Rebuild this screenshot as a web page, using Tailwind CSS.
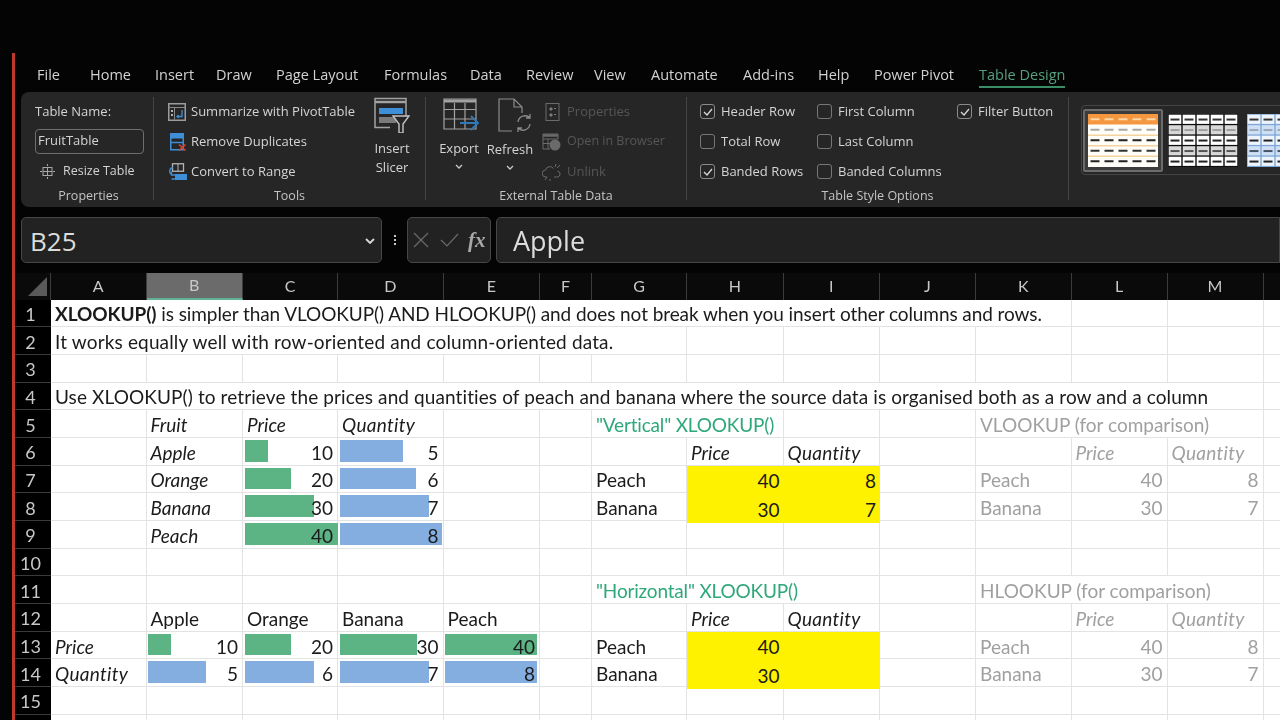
<!DOCTYPE html>
<html lang="en">
  <head>
    <meta charset="UTF-8" />
    <title>XLOOKUP - Excel</title>
    <script src="https://cdn.jsdelivr.net/npm/@tailwindcss/browser@4"></script>
  </head>
  <body class="bg-[#040404] overflow-hidden font-['Open_Sans',sans-serif]">
    <div class="pt-[53px] pl-[12px] h-[720px] blur-[0.4px]">
      <div class="border-l-[3px] border-[#bf382c] h-full overflow-hidden">
        <!-- tabs -->
        <div class="flex h-[39px] pl-[22px] pt-[5px] items-center text-[14.5px] text-[#d2d2d2] whitespace-nowrap">
          <div class="w-[53px]">File</div>
          <div class="w-[65px]">Home</div>
          <div class="w-[61px]">Insert</div>
          <div class="w-[60px]">Draw</div>
          <div class="w-[108px]">Page Layout</div>
          <div class="w-[86px]">Formulas</div>
          <div class="w-[56px]">Data</div>
          <div class="w-[68px]">Review</div>
          <div class="w-[57px]">View</div>
          <div class="w-[92px]">Automate</div>
          <div class="w-[75px]">Add-ins</div>
          <div class="w-[56px]">Help</div>
          <div class="w-[105px]">Power Pivot</div>
          <div class="relative text-[#55a080]">
            Table Design
            <div class="absolute left-0 right-0 top-[22px] h-[2px] bg-[#3d8c68]"></div>
          </div>
        </div>

        <!-- ribbon -->
        <div class="ml-[6px] h-[115px] bg-[#262626] rounded-l-[8px] flex text-[13px] text-[#d4d4d4] whitespace-nowrap">
          <!-- properties -->
          <div class="w-[132px] pt-[4px] shrink-0">
            <div class="h-[30px] pl-[14px] pt-[1px] flex items-center">Table Name:</div>
            <div class="h-[30px] pl-[14px] flex items-center">
              <div class="w-[109px] h-[25px] border border-[#6e6e6e] rounded-[4px] pl-[2px] flex items-center">FruitTable</div>
            </div>
            <div class="h-[30px] pl-[19px] pt-[1px] flex items-center gap-[8px] text-[12.5px]">
              <svg width="15" height="17" viewBox="0 0 15 17" fill="none" stroke="#a8a8a8" stroke-width="1">
                <rect x="3" y="4.5" width="9" height="8" />
                <path d="M3 8.5h9M7.5 4.5v8M7.5 1v2M7.5 14v2M0 8.5h2M13 8.5h2" />
              </svg>
              <span>Resize Table</span>
            </div>
            <div class="h-[20px] pt-[1px] pl-[3px] text-center text-[12.5px] text-[#c4c4c4]">Properties</div>
          </div>
          <div class="w-px h-[103px] mt-[5px] bg-[#454545] shrink-0"></div>

          <!-- tools -->
          <div class="w-[271px] pt-[4px] shrink-0">
            <div class="flex h-[90px]">
              <div class="w-[216px] pl-[14px]">
                <div class="h-[30px] pt-[1px] flex items-center gap-[5px]">
                  <svg width="18" height="18" viewBox="0 0 18 18" fill="none">
                    <rect x="0.75" y="0.75" width="16.5" height="16.5" stroke="#9c9c9c" stroke-width="1.5" />
                    <path d="M1 4.5h16M6.5 4.5v12" stroke="#8a8a8a" />
                    <path d="M3 7h2v2H3zM3 11h2v2H3z" fill="#b4b4b4" />
                    <path d="M14 7v6.5H9M10.5 12l-1.5 1.5 1.5 1.5" stroke="#3f8fd8" stroke-width="1.3" />
                  </svg>
                  <span>Summarize with PivotTable</span>
                </div>
                <div class="h-[30px] pt-[1px] flex items-center gap-[4px] pl-[2px]">
                  <svg width="17" height="18" viewBox="0 0 17 18" fill="none">
                    <rect x="0.75" y="0.75" width="12.5" height="16" stroke="#3f8fd8" stroke-width="1.5" />
                    <rect x="1" y="1" width="12" height="4.5" fill="#3f8fd8" />
                    <path d="M1 9.5h12" stroke="#3f8fd8" stroke-width="1.5" />
                    <path d="M9 11.5l6.5 6M15.5 11.5l-6.5 6" stroke="#d8442e" stroke-width="1.6" />
                  </svg>
                  <span>Remove Duplicates</span>
                </div>
                <div class="h-[30px] pt-[1px] flex items-center gap-[4px]">
                  <svg width="19" height="18" viewBox="0 0 19 18" fill="none">
                    <rect x="4.5" y="0.75" width="11" height="7.5" stroke="#b4b4b4" stroke-width="1.3" />
                    <path d="M10 1v7" stroke="#b4b4b4" />
                    <rect x="7" y="11" width="12" height="6" fill="#3f8fd8" />
                    <path d="M5 4.5C1.5 5 .5 9.5 3.5 11.5M3.5 8.5v3.5H7M7 16H3.5" stroke="#3f8fd8" stroke-width="1.3" />
                  </svg>
                  <span>Convert to Range</span>
                </div>
              </div>
              <div class="w-[44px] flex flex-col items-center">
                <svg class="mt-[1px]" width="36" height="36" viewBox="0 0 36 36" fill="none">
                  <path d="M32 20V1.5H1v29h15" stroke="#a2a2a2" stroke-width="1.5" />
                  <path d="M1 5h31" stroke="#a2a2a2" stroke-width="2.5" />
                  <rect x="5" y="11" width="24" height="6" fill="#3f8fd8" />
                  <rect x="5" y="20" width="17" height="6" fill="#7a7a7a" />
                  <path d="M19 19h16l-6 8v9h-4v-9z" fill="#262626" stroke="#c4c4c4" stroke-width="1.4" />
                </svg>
                <div class="mt-[6px] leading-[19px] text-center">Insert<br />Slicer</div>
              </div>
            </div>
            <div class="h-[20px] pt-[1px] text-center text-[12.5px] text-[#c4c4c4]">Tools</div>
          </div>
          <div class="w-px h-[103px] mt-[5px] bg-[#454545] shrink-0"></div>

          <!-- external table data -->
          <div class="w-[260px] pt-[4px] shrink-0">
            <div class="flex h-[90px]">
              <div class="w-[46px] ml-[10px] flex flex-col items-center">
                <svg class="mt-[2px] ml-[3px]" width="36" height="34" viewBox="0 0 36 34" fill="none">
                  <path d="M1 1h32v30H1z" stroke="#a2a2a2" stroke-width="1.2" />
                  <path d="M1 3h32" stroke="#a2a2a2" stroke-width="3" />
                  <path d="M1 11.5h32M1 21h32M11.5 5v26M22 5v26" stroke="#a2a2a2" stroke-width="1.2" />
                  <path d="M17 25h17M28 18l7 7-7 7" stroke="#2f79b8" stroke-width="1.8" />
                </svg>
                <div class="mt-[7px] leading-[19px]">Export</div>
                <svg class="mt-[6px]" width="8" height="5" viewBox="0 0 8 5" fill="none"><path d="M1 1l3 3 3-3" stroke="#c8c8c8" stroke-width="1.3" /></svg>
              </div>
              <div class="w-[46px] ml-[5px] flex flex-col items-center">
                <svg class="mt-[2px] ml-[10px]" width="34" height="36" viewBox="0 0 34 36" fill="none">
                  <path d="M14 33H1V1h15l8 8v6M16 1v8h8" stroke="#8c8c8c" stroke-width="1.2" />
                  <path d="M20 24a7 7 0 0 1 12-4M32 16v4h-4M32 26a7 7 0 0 1-12 4M20 34v-4h4" stroke="#8c8c8c" stroke-width="1.3" />
                </svg>
                <div class="mt-[6px] leading-[19px]">Refresh</div>
                <svg class="mt-[6px]" width="8" height="5" viewBox="0 0 8 5" fill="none"><path d="M1 1l3 3 3-3" stroke="#c8c8c8" stroke-width="1.3" /></svg>
              </div>
              <div class="ml-[12px] text-[#565656]">
                <div class="h-[30px] pt-[1px] flex items-center gap-[6px]">
                  <svg width="16" height="18" viewBox="0 0 16 18" fill="none">
                    <rect x="1" y="0.5" width="13" height="17" stroke="#6a6a6a" />
                    <path d="M5 5h2v2H5zM5 11h2v2H5zM9 5.5h2M9 11.5h2" fill="#7a7a7a" stroke="#7a7a7a" />
                  </svg>
                  <span>Properties</span>
                </div>
                <div class="h-[30px] pt-[1px] flex items-center gap-[6px] -ml-[3px] text-[12.5px]">
                  <svg width="19" height="18" viewBox="0 0 19 18" fill="none">
                    <path d="M1 1h15v5M1 1v15h7M1 6h15M1 10.5h7M6 6v10" stroke="#6a6a6a" />
                    <path d="M1 2.5h15" stroke="#6a6a6a" stroke-width="2.5" />
                    <circle cx="13" cy="12" r="5.5" fill="#6a6a6a" />
                  </svg>
                  <span>Open in Browser</span>
                </div>
                <div class="h-[30px] pt-[1px] flex items-center gap-[6px] -ml-[3px]">
                  <svg width="19" height="18" viewBox="0 0 19 18" fill="none" stroke="#6a6a6a">
                    <path d="M5 14H4a3.5 3.5 0 0 1-.5-7 4.5 4.5 0 0 1 8-1.5M12 14h2.5a3 3 0 0 0 1-6" />
                    <path d="M3 17l2-3M8 16v2M14 1l-1 3M18 2l-3 3" />
                  </svg>
                  <span>Unlink</span>
                </div>
              </div>
            </div>
            <div class="h-[20px] pt-[1px] text-center text-[12.5px] text-[#c4c4c4]">External Table Data</div>
          </div>
          <div class="w-px h-[103px] mt-[5px] bg-[#454545] shrink-0"></div>

          <!-- table style options -->
          <div class="w-[381px] pt-[4px] shrink-0">
            <div class="flex h-[90px] pl-[13px]">
              <div class="w-[117px]">
                <div class="h-[30px] pt-[1px] flex items-center gap-[6px]">
                  <div class="w-[15px] h-[15px] rounded-[3px] border border-[#8a8a8a] flex items-center justify-center">
                    <svg width="10" height="8" viewBox="0 0 10 8" fill="none"><path d="M1 4l3 3 5-6" stroke="#d8d8d8" stroke-width="1.3" /></svg>
                  </div>
                  <span>Header Row</span>
                </div>
                <div class="h-[30px] pt-[1px] flex items-center gap-[6px]">
                  <div class="w-[15px] h-[15px] rounded-[3px] border border-[#777]"></div>
                  <span>Total Row</span>
                </div>
                <div class="h-[30px] pt-[1px] flex items-center gap-[6px]">
                  <div class="w-[15px] h-[15px] rounded-[3px] border border-[#8a8a8a] flex items-center justify-center">
                    <svg width="10" height="8" viewBox="0 0 10 8" fill="none"><path d="M1 4l3 3 5-6" stroke="#d8d8d8" stroke-width="1.3" /></svg>
                  </div>
                  <span>Banded Rows</span>
                </div>
              </div>
              <div class="w-[140px]">
                <div class="h-[30px] pt-[1px] flex items-center gap-[6px]">
                  <div class="w-[15px] h-[15px] rounded-[3px] border border-[#777]"></div>
                  <span>First Column</span>
                </div>
                <div class="h-[30px] pt-[1px] flex items-center gap-[6px]">
                  <div class="w-[15px] h-[15px] rounded-[3px] border border-[#777]"></div>
                  <span>Last Column</span>
                </div>
                <div class="h-[30px] pt-[1px] flex items-center gap-[6px]">
                  <div class="w-[15px] h-[15px] rounded-[3px] border border-[#777]"></div>
                  <span>Banded Columns</span>
                </div>
              </div>
              <div>
                <div class="h-[30px] pt-[1px] flex items-center gap-[6px]">
                  <div class="w-[15px] h-[15px] rounded-[3px] border border-[#8a8a8a] flex items-center justify-center">
                    <svg width="10" height="8" viewBox="0 0 10 8" fill="none"><path d="M1 4l3 3 5-6" stroke="#d8d8d8" stroke-width="1.3" /></svg>
                  </div>
                  <span>Filter Button</span>
                </div>
              </div>
            </div>
            <div class="h-[20px] pt-[1px] text-center text-[12.5px] text-[#c4c4c4]">Table Style Options</div>
          </div>
          <div class="w-px h-[103px] mt-[5px] bg-[#454545] shrink-0"></div>

          <!-- style gallery -->
          <div class="ml-[12px] mt-[13px] h-[70px] w-[300px] shrink-0 border border-[#454545] rounded-l-[4px] flex items-center pl-[1px]">
            <div class="w-[80px] h-[63px] border-2 border-[#6c6c6c] bg-[#3c3c3c] rounded-[2px] flex items-center justify-center shrink-0">
              <svg width="70" height="53" viewBox="0 0 70 53" id="thumb1"></svg>
            </div>
            <svg class="ml-[5px] shrink-0" width="70" height="53" viewBox="0 0 70 53" id="thumb2"></svg>
            <svg class="ml-[9px] shrink-0" width="70" height="53" viewBox="0 0 70 53" id="thumb3"></svg>
          </div>
        </div>

        <!-- formula bar -->
        <div class="mt-[10px] ml-[6px] h-[46px] flex text-[#dcdcdc]">
          <div class="w-[361px] shrink-0 bg-[#222222] border border-[#474747] rounded-[5px] pl-[8px] pr-[6px] pt-[2px] flex items-center justify-between">
            <span class="text-[26px]">B25</span>
            <svg width="10" height="6" viewBox="0 0 10 6" fill="none"><path d="M1 1l4 4 4-4" stroke="#d8d8d8" stroke-width="1.8" /></svg>
          </div>
          <div class="w-[25px] shrink-0 flex flex-col items-center justify-center gap-[2px]">
            <div class="w-[2px] h-[2px] bg-[#c8c8c8]"></div>
            <div class="w-[2px] h-[2px] bg-[#c8c8c8]"></div>
            <div class="w-[2px] h-[2px] bg-[#c8c8c8]"></div>
          </div>
          <div class="w-[84px] shrink-0 bg-[#222222] border border-[#474747] rounded-[5px] flex items-center pl-[5px] gap-[11px]">
            <svg width="16" height="16" viewBox="0 0 16 16" fill="none"><path d="M1 1l14 14M15 1L1 15" stroke="#6a6a6a" stroke-width="1.2" /></svg>
            <svg width="19" height="14" viewBox="0 0 19 14" fill="none"><path d="M1 7l6 6L18 1" stroke="#6a6a6a" stroke-width="1.2" /></svg>
            <span class="-ml-[2px] font-['Liberation_Serif',serif] italic font-bold text-[21px] text-[#a8a8a8] leading-none">fx</span>
          </div>
          <div class="ml-[5px] flex-1 bg-[#222222] border border-[#474747] rounded-l-[5px] pl-[16px] pt-[2px] flex items-center text-[27px]">Apple</div>
        </div>

        <!-- sheet -->
        <div id="sheet" class="mt-[10px] bg-white grid grid-cols-[36px_95.5px_96.5px_95px_105.5px_96.5px_52px_95px_96.5px_96.5px_96px_95.5px_96px_96px_20px] grid-rows-[26.5px] auto-rows-[27.7px] font-['Lato',sans-serif] text-[19px] text-[#1b1b1b] leading-none"></div>
      </div>
    </div>

    <script>
      const GREEN = "#5cb383";
      const BLUE = "#84ade0";
      const GREY = "text-[#a0a0a0]";
      const TITLE = "text-[#2ea87a] tracking-[-0.18px]";
      const letters = ["A", "B", "C", "D", "E", "F", "G", "H", "I", "J", "K", "L", "M", ""];

      // col is 0 for column A. bar is the data bar's width in px, fill marks the yellow results
      const rows = {
        1: [{ col: 0, span: 11, cls: "tracking-[-0.08px]", html: "<b>XLOOKUP()</b> is simpler than VLOOKUP() AND HLOOKUP() and does not break when you insert other columns and rows." }],
        2: [{ col: 0, span: 7, cls: "tracking-[0.15px]", html: "It works equally well with row-oriented and column-oriented data." }],
        4: [{ col: 0, span: 13, cls: "tracking-[0.1px]", html: "Use XLOOKUP() to retrieve the prices and quantities of peach and banana where the source data is organised both as a row and a column" }],
        5: [
          { col: 1, html: "Fruit", cls: "italic" }, { col: 2, html: "Price", cls: "italic" }, { col: 3, html: "Quantity", cls: "italic tracking-[0.3px]" },
          { col: 6, span: 2, html: '"Vertical" XLOOKUP()', cls: TITLE },
          { col: 10, span: 3, html: "VLOOKUP (for comparison)", cls: GREY },
        ],
        6: [
          { col: 1, html: "Apple", cls: "italic" }, { col: 2, num: 10, bar: 23, color: GREEN }, { col: 3, num: 5, bar: 63, color: BLUE },
          { col: 7, html: "Price", cls: "italic" }, { col: 8, html: "Quantity", cls: "italic tracking-[0.3px]" },
          { col: 11, html: "Price", cls: "italic " + GREY }, { col: 12, html: "Quantity", cls: "italic tracking-[0.3px] " + GREY },
        ],
        7: [
          { col: 1, html: "Orange", cls: "italic" }, { col: 2, num: 20, bar: 46, color: GREEN }, { col: 3, num: 6, bar: 76, color: BLUE },
          { col: 6, html: "Peach" }, { col: 7, num: 40, fill: true }, { col: 8, num: 8, fill: true },
          { col: 10, html: "Peach", cls: GREY }, { col: 11, num: 40, cls: GREY }, { col: 12, num: 8, cls: GREY },
        ],
        8: [
          { col: 1, html: "Banana", cls: "italic" }, { col: 2, num: 30, bar: 69, color: GREEN }, { col: 3, num: 7, bar: 89, color: BLUE },
          { col: 6, html: "Banana" }, { col: 7, num: 30, fill: true, cls: "-mb-[2px]" }, { col: 8, num: 7, fill: true, cls: "-mb-[2px]" },
          { col: 10, html: "Banana", cls: GREY }, { col: 11, num: 30, cls: GREY }, { col: 12, num: 7, cls: GREY },
        ],
        9: [{ col: 1, html: "Peach", cls: "italic" }, { col: 2, num: 40, bar: 93, color: GREEN }, { col: 3, num: 8, bar: 102, color: BLUE }],
        11: [
          { col: 6, span: 3, html: '"Horizontal" XLOOKUP()', cls: TITLE },
          { col: 10, span: 3, html: "HLOOKUP (for comparison)", cls: GREY },
        ],
        12: [
          { col: 1, html: "Apple" }, { col: 2, html: "Orange" }, { col: 3, html: "Banana" }, { col: 4, html: "Peach" },
          { col: 7, html: "Price", cls: "italic" }, { col: 8, html: "Quantity", cls: "italic tracking-[0.3px]" },
          { col: 11, html: "Price", cls: "italic " + GREY }, { col: 12, html: "Quantity", cls: "italic tracking-[0.3px] " + GREY },
        ],
        13: [
          { col: 0, html: "Price", cls: "italic" }, { col: 1, num: 10, bar: 23, color: GREEN }, { col: 2, num: 20, bar: 46, color: GREEN },
          { col: 3, num: 30, bar: 77, color: GREEN }, { col: 4, num: 40, bar: 92, color: GREEN },
          { col: 6, html: "Peach" }, { col: 7, num: 40, fill: true }, { col: 8, html: "", fill: true },
          { col: 10, html: "Peach", cls: GREY }, { col: 11, num: 40, cls: GREY }, { col: 12, num: 8, cls: GREY },
        ],
        14: [
          { col: 0, html: "Quantity", cls: "italic tracking-[0.3px]" }, { col: 1, num: 5, bar: 58, color: BLUE }, { col: 2, num: 6, bar: 69, color: BLUE },
          { col: 3, num: 7, bar: 89, color: BLUE }, { col: 4, num: 8, bar: 92, color: BLUE },
          { col: 6, html: "Banana" }, { col: 7, num: 30, fill: true, cls: "-mb-[2px]" }, { col: 8, html: "", fill: true, cls: "-mb-[2px]" },
          { col: 10, html: "Banana", cls: GREY }, { col: 11, num: 30, cls: GREY }, { col: 12, num: 7, cls: GREY },
        ],
      };

      let html = '<div class="bg-[#0a0a0a] border-r border-[#3c3c3c] flex items-center justify-end pr-[3px]"><div class="w-0 h-0 border-l-[19px] border-l-transparent border-b-[19px] border-b-[#5a5a5a]"></div></div>';
      letters.forEach((l) => {
        const active = l === "B" ? "bg-[#6b6b6b] border-b-2 border-b-[#5fb094]" : "bg-[#0a0a0a]";
        html += `<div class="${active} border-r border-[#3c3c3c] flex items-center justify-center text-[16px] text-[#c8c8c8]">${l}</div>`;
      });

      for (let r = 1; r <= 16; r++) {
        // row 16 only shows its top edge, so it gets no number
        html += `<div class="bg-black border-b border-[#3a3a3a] flex items-center justify-center pr-[5px] pt-[2px] text-[18px] text-[#c8c8c8]">${r < 16 ? r : ""}</div>`;
        const cells = rows[r] || [];
        for (let c = 0; c < 14; c++) {
          const cell = cells.find((x) => x.col === c);
          if (!cell) {
            html += '<div class="border-r border-b border-[#e3e3e3]"></div>';
            continue;
          }
          const span = cell.span ? `style="grid-column: span ${cell.span}"` : "";
          const isNum = cell.num !== undefined;
          const skin = cell.fill ? "bg-[#fff200] z-10" : "border-r border-b border-[#e3e3e3]";
          const bar = cell.bar ? `<div class="absolute left-[1.5px] top-[2px] bottom-[3px]" style="width:${cell.bar}px;background:${cell.color}"></div>` : "";
          html += `<div ${span} class="relative ${skin} flex items-center whitespace-nowrap px-[4px] pt-[2px] ${isNum ? "justify-end" : ""} ${cell.cls || ""}">${bar}<span class="relative">${isNum ? cell.num : cell.html}</span></div>`;
          if (cell.span) c += cell.span - 1;
        }
      }
      document.getElementById("sheet").innerHTML = html;

      // table style thumbnails in the gallery
      function dashes(colW, rowH, y0, colors) {
        let out = "";
        for (let r = 0; r < 5; r++) {
          for (let c = 0; c < 5; c++) {
            const x = colW * c + colW / 2 - 4.5;
            const y = y0 + rowH * r + rowH / 2 - 1;
            out += `<rect x="${x}" y="${y}" width="9" height="2" fill="${colors[r]}" />`;
          }
        }
        return out;
      }
      function gridded(line, plain, band, colors) {
        let out = `<rect width="70" height="53" fill="${line}" />`;
        for (let r = 0; r < 5; r++) {
          for (let c = 0; c < 5; c++) {
            const fill = r % 2 ? band : plain;
            out += `<rect x="${0.7 + c * 14}" y="${0.7 + r * 10.5}" width="12.6" height="9.2" fill="${fill}" />`;
          }
        }
        return out + dashes(14, 10.5, 0.3, colors);
      }
      document.getElementById("thumb1").innerHTML =
        '<rect width="70" height="53" fill="#fffdf8" /><rect width="70" height="10.5" fill="#f4973f" />' +
        '<rect y="20.5" width="70" height="1.5" fill="#f3d49f" /><rect y="31" width="70" height="1.5" fill="#f3d49f" /><rect y="41.5" width="70" height="1.5" fill="#f3d49f" />' +
        dashes(14, 10.5, 0, ["#fbd6a8", "#a8a8a8", "#222222", "#333333", "#222222"]);
      document.getElementById("thumb2").innerHTML = gridded("#0d0d0d", "#ffffff", "#d8d8d8", ["#333333", "#a0a0a0", "#222222", "#555555", "#222222"]);
      document.getElementById("thumb3").innerHTML = gridded("#7fa6d6", "#eef4fc", "#cfe0f5", ["#333333", "#9aa8b8", "#222222", "#445566", "#222222"]);
    </script>
  </body>
</html>
